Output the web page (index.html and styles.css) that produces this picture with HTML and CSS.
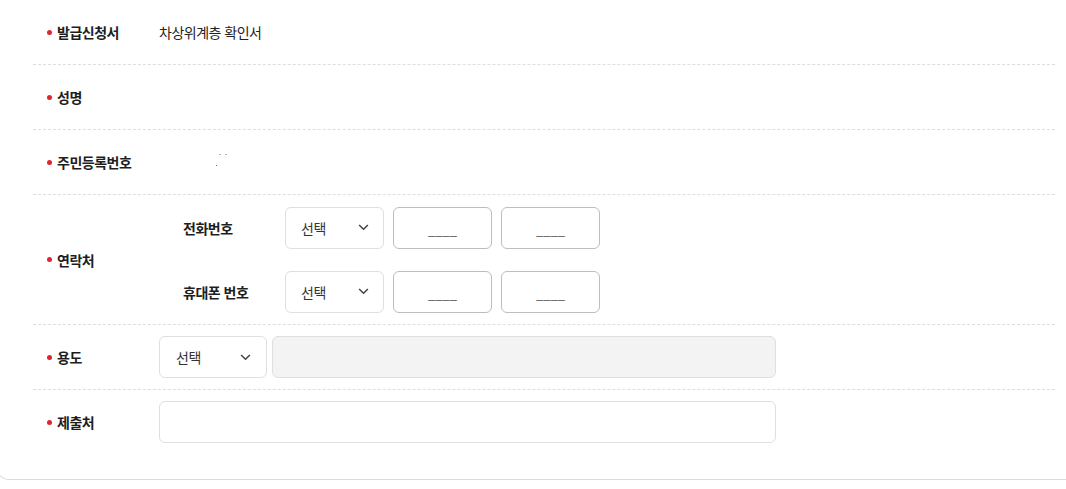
FILE: index.html
```html
<!DOCTYPE html>
<html lang="ko">
<head>
<meta charset="utf-8">
<link rel="stylesheet" href="styles.css">
</head>
<body>
<div class="card">
  <div class="form">
    <div class="row">
      <div class="label">발급신청서</div>
      <div class="value">차상위계층 확인서</div>
    </div>
    <div class="row">
      <div class="label">성명</div>
      <div class="value"></div>
    </div>
    <div class="row">
      <div class="label">주민등록번호</div>
      <div class="value"><span class="mask"><i class="d1"></i><i class="d2"></i><i class="d3"></i></span></div>
    </div>
    <div class="row row-contact">
      <div class="label">연락처</div>
      <div class="value">
        <div class="contact">
          <div class="sub">
            <div class="sublabel">전화번호</div>
            <div class="select sm"><span>선택</span><svg class="chev" viewBox="0 0 12 8" width="11" height="7"><path d="M1 1.2 6 6 11 1.2" fill="none" stroke="#444" stroke-width="1.8"/></svg></div>
            <div class="num">____</div>
            <div class="num">____</div>
          </div>
          <div class="sub">
            <div class="sublabel">휴대폰 번호</div>
            <div class="select sm"><span>선택</span><svg class="chev" viewBox="0 0 12 8" width="11" height="7"><path d="M1 1.2 6 6 11 1.2" fill="none" stroke="#444" stroke-width="1.8"/></svg></div>
            <div class="num">____</div>
            <div class="num">____</div>
          </div>
        </div>
      </div>
    </div>
    <div class="row">
      <div class="label">용도</div>
      <div class="value inline">
        <div class="select lg"><span>선택</span><svg class="chev" viewBox="0 0 12 8" width="11" height="7"><path d="M1 1.2 6 6 11 1.2" fill="none" stroke="#444" stroke-width="1.8"/></svg></div>
        <div class="field disabled"></div>
      </div>
    </div>
    <div class="row last">
      <div class="label">제출처</div>
      <div class="value">
        <div class="field wide"></div>
      </div>
    </div>
  </div>
</div>
</body>
</html>
```

FILE: styles.css
```css
html, body {
  margin: 0;
  padding: 0;
  background: #fff;
  overflow: hidden;
}
body {
  font-family: "Noto Sans CJK KR", "Noto Sans", sans-serif;
  color: #222;
  font-size: 14px;
  letter-spacing: -0.5px;
}
.card {
  margin: 0 -20px 0 -2px;
  height: 479px;
  border: 1px solid #dcdcdc;
  border-top: 0;
  border-radius: 0 0 10px 10px;
  box-sizing: content-box;
}
.form {
  margin-left: 34px;
  width: 1022px;
}
.row {
  display: flex;
  align-items: center;
  height: 64px;
  border-bottom: 1px dashed #dedede;
}
.row-contact {
  height: 129px;
}
.row.last {
  border-bottom: 0;
}
.label {
  width: 126px;
  flex: none;
  box-sizing: border-box;
  padding-left: 14px;
  display: flex;
  align-items: center;
  gap: 5px;
  font-weight: 700;
  color: #1e1e1e;
}
.label::before {
  content: "";
  width: 5px;
  height: 5px;
  border-radius: 50%;
  background: #e3242f;
  flex: none;
}
.value {
  flex: 1;
  display: flex;
  align-items: center;
  color: #222;
}
.value.inline {
  gap: 5px;
}
.mask {
  position: relative;
  width: 20px;
  height: 20px;
}
.mask i {
  position: absolute;
  width: 2px;
  height: 1px;
  background: #9bb8d8;
}
.mask .d1 { left: 60px; top: 2px; }
.mask .d2 { left: 66px; top: 2px; }
.mask .d3 { left: 57px; top: 13px; width: 1px; background: #3a78b8; }
.contact {
  display: flex;
  flex-direction: column;
  gap: 22px;
  padding-left: 24px;
}
.sub {
  display: flex;
  align-items: center;
  gap: 9px;
}
.sublabel {
  width: 93px;
  flex: none;
  font-weight: 700;
  color: #1e1e1e;
}
.select {
  height: 42px;
  box-sizing: border-box;
  border: 1px solid #dfdfdf;
  border-radius: 6px;
  display: flex;
  align-items: center;
  justify-content: space-between;
  color: #333;
  background: #fff;
}
.select.sm {
  width: 99px;
  padding: 0 14px 0 15px;
}
.select.lg {
  width: 108px;
  padding: 0 15px 0 16px;
}
.chev {
  display: block;
}
.num {
  width: 99px;
  height: 42px;
  box-sizing: border-box;
  border: 1px solid #bdbdbd;
  border-radius: 6px;
  display: flex;
  align-items: center;
  justify-content: center;
  padding-top: 4px;
  color: #555;
  letter-spacing: 0;
  font-size: 13px;
}
.field {
  height: 42px;
  box-sizing: border-box;
  border: 1px solid #dfdfdf;
  border-radius: 6px;
  background: #fff;
}
.field.disabled {
  width: 504px;
  background: #f3f3f3;
}
.field.wide {
  width: 617px;
}
```
